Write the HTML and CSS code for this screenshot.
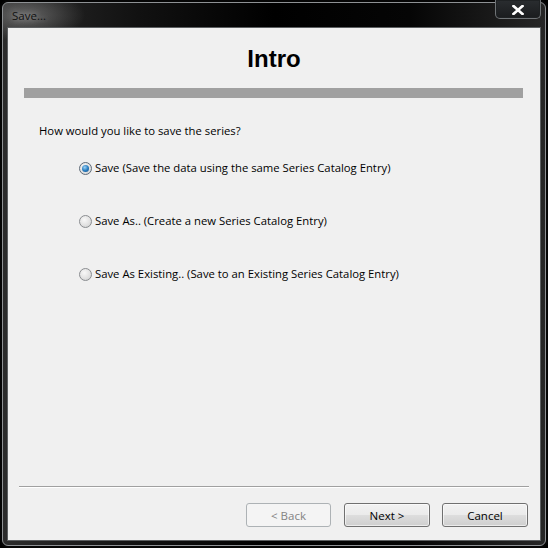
FILE: index.html
```html
<!DOCTYPE html>
<html>
<head>
<meta charset="utf-8">
<link rel="stylesheet" href="styles.css">
</head>
<body>
<div class="window">
  <div class="frame">
    <div class="titlebar">
      <span class="title">Save...</span>
      <span class="close">
        <svg width="12" height="10" viewBox="0 0 12 10"><path d="M1.5 1 L10.5 9 M10.5 1 L1.5 9" stroke="#fff" stroke-width="2.6" stroke-linecap="square"/></svg>
      </span>
    </div>
    <div class="client">
      <h1 class="heading">Intro</h1>
      <div class="bar"></div>
      <p class="question">How would you like to save the series?</p>
      <div class="options">
        <div class="option"><span class="radio checked"></span><span>Save (Save the data using the same Series Catalog Entry)</span></div>
        <div class="option"><span class="radio"></span><span>Save As.. (Create a new Series Catalog Entry)</span></div>
        <div class="option"><span class="radio"></span><span>Save As Existing.. (Save to an Existing Series Catalog Entry)</span></div>
      </div>
      <div class="spacer"></div>
      <div class="separator"></div>
      <div class="buttons">
        <button class="btn disabled">&lt; Back</button>
        <button class="btn next">Next &gt;</button>
        <button class="btn cancel">Cancel</button>
      </div>
    </div>
  </div>
</div>
</body>
</html>
```
FILE: styles.css
```css
html, body {
  margin: 0;
  padding: 0;
  background: #000;
}
body {
  width: 548px;
  height: 548px;
  overflow: hidden;
  font-family: "Open Sans", "Noto Sans", sans-serif;
}
.window {
  width: 548px;
  height: 548px;
  box-sizing: border-box;
  padding: 2px;
  background: #050505;
  border-radius: 8px;
}
.frame {
  height: 100%;
  box-sizing: border-box;
  border: 1px solid #8e9194;
  border-radius: 6px;
  padding: 0 4px 4px 4px;
  display: flex;
  flex-direction: column;
  background:
    radial-gradient(ellipse 60px 26px at 22px 12px, rgba(120,120,120,0.75), rgba(90,90,90,0) 100%),
    linear-gradient(to right, #2c2c2c 0%, #111 25%, #000 50%, #050505 75%, #262626 100%);
}
.titlebar {
  height: 24px;
  display: flex;
  align-items: flex-start;
  justify-content: space-between;
}
.title {
  margin: 5px 0 0 5px;
  font-size: 11.5px;
  line-height: 16px;
  color: #111;
  text-shadow: 0 0 6px rgba(220,220,220,0.7);
}
.close {
  width: 46px;
  height: 19px;
  box-sizing: border-box;
  margin-top: -3px;
  border: 1px solid #6f7376;
  border-top: none;
  border-radius: 0 0 5px 5px;
  box-shadow: inset 0 0 0 1px #1f2224;
  background: linear-gradient(#2a2d30, #1a1c1e);
  display: flex;
  align-items: center;
  justify-content: center;
  padding-top: 2px;
}
.client {
  flex: 1;
  background: #f0f0f0;
  border: 1px solid #5c5f61;
  display: flex;
  flex-direction: column;
  color: #000;
}
.heading {
  margin: 17px 0 0 0;
  font-family: "Liberation Sans", Arial, sans-serif;
  font-weight: bold;
  font-size: 24px;
  line-height: 28px;
  text-align: center;
  color: #000;
}
.bar {
  margin: 15px 17px 0 16px;
  height: 10px;
  background: #a0a0a0;
}
.question {
  margin: 25px 0 0 31px;
  font-size: 11.3px;
  line-height: 16px;
}
.options {
  margin: 21px 0 0 71px;
  display: flex;
  flex-direction: column;
  gap: 37px;
}
.option {
  display: flex;
  align-items: center;
  gap: 3px;
  font-size: 11.3px;
  line-height: 16px;
  height: 16px;
}
.radio {
  width: 13px;
  height: 13px;
  box-sizing: border-box;
  border-radius: 50%;
  border: 1px solid #8a8d90;
  background: radial-gradient(circle at 40% 35%, #f8f8f8 0%, #e2e2e2 55%, #c9cacb 100%);
  position: relative;
}
.radio.checked {
  border-color: #5f6b78;
}
.radio.checked::after {
  content: "";
  position: absolute;
  left: 2px;
  top: 2px;
  width: 7px;
  height: 7px;
  border-radius: 50%;
  background: radial-gradient(circle at 40% 35%, #9ed3f5 0%, #2b7fc2 50%, #0f4e86 100%);
}
.spacer {
  flex: 1;
}
.separator {
  margin: 0 11px;
  height: 1px;
  background: #a0a0a0;
  border-bottom: 1px solid #fff;
}
.buttons {
  display: flex;
  justify-content: flex-end;
  gap: 12px;
  margin: 15px 12px 13px 0;
}
.btn {
  width: 86px;
  height: 24px;
  box-sizing: border-box;
  border: 1px solid #707070;
  border-radius: 3px;
  background: linear-gradient(#f2f2f2 0%, #ebebeb 48%, #dddddd 52%, #cfcfcf 100%);
  box-shadow: inset 0 0 0 1px rgba(255,255,255,0.6);
  font-family: "Open Sans", "Noto Sans", sans-serif;
  font-size: 11.5px;
  color: #000;
  padding: 0;
}
.btn.disabled {
  width: 85px;
  border-color: #adb2b5;
  background: #f4f4f4;
  color: #838383;
  box-shadow: none;
  margin-right: 1px;
}
```
